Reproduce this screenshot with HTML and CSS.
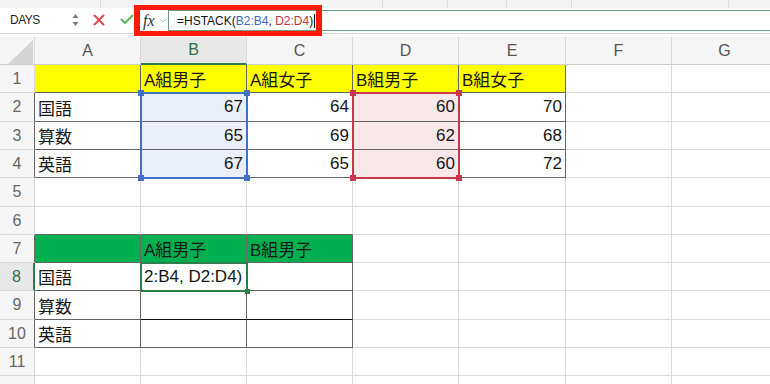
FILE: index.html
```html
<!DOCTYPE html>
<html lang="ja">
<head>
<meta charset="utf-8">
<title>HSTACK</title>
<link rel="stylesheet" href="styles.css">
</head>
<body>
<div class="app">
  <div class="strip">
    <div class="seg s1"></div><div class="seg s2"></div><div class="seg s3"></div><div class="seg s4"></div><div class="seg s5"></div><div class="seg s6"></div>
  </div>
  <div class="fbar">
    <div class="namebox">
      <span class="name">DAYS</span>
      <svg class="spin" width="7" height="14" viewBox="0 0 7 14"><path d="M3.5 1 L6.5 5 L0.5 5 Z M3.5 13 L6.5 9 L0.5 9 Z" fill="#7a7a7a"/></svg>
    </div>
    <div class="acts">
      <svg class="ico" width="12" height="12" viewBox="0 0 12 12"><path d="M1.5 1.5 L10.5 10.5 M10.5 1.5 L1.5 10.5" stroke="#e4474d" stroke-width="2" stroke-linecap="round"/></svg>
      <svg class="ico" width="14" height="11" viewBox="0 0 14 11"><path d="M1.5 5.5 L5 9 L12.5 1.5" stroke="#54b35a" stroke-width="2" fill="none" stroke-linecap="round" stroke-linejoin="round"/></svg>
    </div>
    <div class="fx">
      <span class="fxt">fx</span>
      <svg width="6" height="4" viewBox="0 0 6 4"><path d="M0.5 0.5 L3 3 L5.5 0.5" stroke="#b5b5b5" fill="none" stroke-width="1"/></svg>
    </div>
    <div class="input"><span>=HSTACK(</span><span class="rb">B2:B4</span><span>, </span><span class="rr">D2:D4</span><span>)</span><span class="caret"></span></div>
  </div>
  <div class="gap"></div>
  <div class="sheet">
    <div class="corner"><svg width="26" height="24" viewBox="0 0 26 24"><path d="M25 0 L25 24 L0 24 Z" fill="#d4d4d4"/></svg></div>
    <div class="c hd">A</div><div class="c hd hsel">B</div><div class="c hd">C</div><div class="c hd">D</div><div class="c hd">E</div><div class="c hd">F</div><div class="c hd">G</div>

    <div class="c rh">1</div><div class="c y dr db"></div><div class="c y dr db">A組男子</div><div class="c y dr db">A組女子</div><div class="c y dr db">B組男子</div><div class="c y dr db">B組女子</div><div class="c"></div><div class="c"></div>

    <div class="c rh dr">2</div><div class="c dr db">国語</div><div class="c n sb dr db">67</div><div class="c n dr db">64</div><div class="c n sr dr db">60</div><div class="c n dr db">70</div><div class="c"></div><div class="c"></div>

    <div class="c rh dr">3</div><div class="c dr db">算数</div><div class="c n sb dr db">65</div><div class="c n dr db">69</div><div class="c n sr dr db">62</div><div class="c n dr db">68</div><div class="c"></div><div class="c"></div>

    <div class="c rh dr">4</div><div class="c dr db">英語</div><div class="c n sb dr db">67</div><div class="c n dr db">65</div><div class="c n sr dr db">60</div><div class="c n dr db">72</div><div class="c"></div><div class="c"></div>

    <div class="c rh">5</div><div class="c"></div><div class="c"></div><div class="c"></div><div class="c"></div><div class="c"></div><div class="c"></div><div class="c"></div>

    <div class="c rh">6</div><div class="c db"></div><div class="c db"></div><div class="c db"></div><div class="c"></div><div class="c"></div><div class="c"></div><div class="c"></div>

    <div class="c rh dr">7</div><div class="c g dr db"></div><div class="c g dr db">A組男子</div><div class="c g dr db">B組男子</div><div class="c"></div><div class="c"></div><div class="c"></div><div class="c"></div>

    <div class="c rh rsel">8</div><div class="c dr db">国語</div><div class="c dr db">2:B4, D2:D4)</div><div class="c dr db"></div><div class="c"></div><div class="c"></div><div class="c"></div><div class="c"></div>

    <div class="c rh dr">9</div><div class="c dr db">算数</div><div class="c dr kb"></div><div class="c dr kb"></div><div class="c"></div><div class="c"></div><div class="c"></div><div class="c"></div>

    <div class="c rh dr">10</div><div class="c dr db">英語</div><div class="c dr db"></div><div class="c dr db"></div><div class="c"></div><div class="c"></div><div class="c"></div><div class="c"></div>

    <div class="c rh">11</div><div class="c"></div><div class="c"></div><div class="c"></div><div class="c"></div><div class="c"></div><div class="c"></div><div class="c"></div>

    <div class="c rh last"></div><div class="c"></div><div class="c"></div><div class="c"></div><div class="c"></div><div class="c"></div><div class="c"></div><div class="c"></div>

    <div class="range blue">
      <i class="h tl"></i><i class="h tr"></i><i class="h bl"></i><i class="h br"></i>
    </div>
    <div class="range red">
      <i class="h tl"></i><i class="h tr"></i><i class="h bl"></i><i class="h br"></i>
    </div>
    <div class="active"><i class="h br"></i></div>
  </div>
  <div class="annot"></div>
</div>
</body>
</html>
```
FILE: styles.css
```css
html, body {
  margin: 0;
  padding: 0;
  background: #ffffff;
  overflow: hidden;
}
.app {
  position: relative;
  width: 770px;
  height: 384px;
  overflow: hidden;
  font-family: "Liberation Sans", "Noto Sans CJK JP", sans-serif;
  color: #161616;
}
.strip {
  height: 8px;
  display: flex;
  background: #f4f4f4;
}
.seg { height: 8px; border-right: 1px solid #dedede; box-sizing: border-box; }
.s1 { width: 101px; }
.s2 { width: 282px; }
.s3 { width: 65px; }
.s4 { width: 59px; }
.s5 { width: 65px; }
.s6 { width: 157px; }
.fbar {
  height: 25px;
  display: flex;
  align-items: flex-start;
  background: #ffffff;
}
.namebox {
  width: 84px;
  height: 23px;
  display: flex;
  align-items: center;
  justify-content: space-between;
  padding: 0 5px 0 10px;
  box-sizing: border-box;
}
.name {
  font-size: 12px;
  color: #1e1e1e;
  letter-spacing: -0.5px;
}
.spin { margin-top: 1px; }
.acts {
  width: 55px;
  height: 23px;
  display: flex;
  align-items: center;
  gap: 15px;
  padding-left: 9px;
  box-sizing: border-box;
}
.ico { display: block; }
.fx {
  width: 29px;
  height: 21px;
  margin-top: 2px;
  display: flex;
  align-items: center;
  gap: 5px;
  padding-left: 4px;
  box-sizing: border-box;
}
.fxt {
  font-family: "Liberation Serif", serif;
  font-style: italic;
  font-size: 16px;
  color: #333;
}
.input {
  flex: 1;
  height: 21px;
  margin-top: 2px;
  border: 1px solid #6f9c7f;
  border-right: none;
  box-sizing: border-box;
  display: flex;
  align-items: center;
  padding-left: 8px;
  font-size: 12px;
  color: #111;
  white-space: pre;
}
.rb { color: #3a6cc0; }
.rr { color: #c23440; }
.caret {
  display: inline-block;
  width: 1px;
  height: 14px;
  background: #111;
  margin-left: 1px;
}
.gap {
  height: 4px;
  border-top: 1px solid #d8d8d8;
  box-sizing: border-box;
  background: #ffffff;
}
.sheet {
  position: relative;
  display: grid;
  grid-template-columns: 35px 106px 106px 106px 106px 107px 106px 106px;
  grid-template-rows: 28px 28px 29px 28px 28px 29px 28px 28px 28px 29px 28px 28px 28px;
  width: 778px;
}
.c {
  box-sizing: border-box;
  border-right: 1px solid #dadada;
  border-bottom: 1px solid #dadada;
  display: flex;
  align-items: center;
  padding: 0 3px;
  font-size: 17px;
  white-space: nowrap;
  overflow: visible;
}
.corner {
  box-sizing: border-box;
  background: #f6f6f6;
  border-right: 1px solid #dadada;
  border-bottom: 1px solid #cfcfcf;
  padding: 3px 0 0 8px;
}
.corner svg { display: block; }
.hd {
  background: #f6f6f6;
  justify-content: center;
  color: #555;
  font-size: 16px;
  border-bottom-color: #cfcfcf;
}
.hsel {
  background: #e8e8e8;
  color: #2d6e45;
  border-bottom: 2px solid #2e7d4c;
}
.rh {
  background: #f6f6f6;
  justify-content: center;
  color: #666;
  font-size: 16px;
  padding: 0;
}
.rsel {
  background: #e8e8e8;
  color: #2d6e45;
  border-right: 2px solid #2e7d4c;
}
.y { background: #ffff00; }
.g { background: #00b050; }
.n { justify-content: flex-end; }
.sb { background: #e9eef8; }
.sr { background: #f8e8ea; }
.dr { border-right-color: #666666; }
.db { border-bottom-color: #666666; }
.kb { border-bottom-color: #111111; }
.range {
  position: absolute;
  left: 140px;
  top: 55px;
  width: 108px;
  height: 87px;
  box-sizing: border-box;
  border: 2px solid #3f72c5;
  pointer-events: none;
}
.range.red {
  left: 352px;
  border-color: #c8384a;
}
.h {
  position: absolute;
  width: 6px;
  height: 6px;
  background: #3f72c5;
}
.red .h { background: #c8384a; }
.tl { left: -4px; top: -4px; }
.tr { right: -4px; top: -4px; }
.bl { left: -4px; bottom: -4px; }
.br { right: -4px; bottom: -4px; }
.active {
  position: absolute;
  left: 140px;
  top: 225px;
  width: 108px;
  height: 30px;
  box-sizing: border-box;
  border: 2px solid #2e7d4c;
  pointer-events: none;
}
.active .h {
  background: #2e7d4c;
  width: 5px;
  height: 5px;
}
.annot {
  position: absolute;
  left: 134px;
  top: 5px;
  width: 188px;
  height: 31px;
  box-sizing: border-box;
  border-style: solid;
  border-color: #ff1a0a;
  border-width: 5px 6px;
  pointer-events: none;
}
```
